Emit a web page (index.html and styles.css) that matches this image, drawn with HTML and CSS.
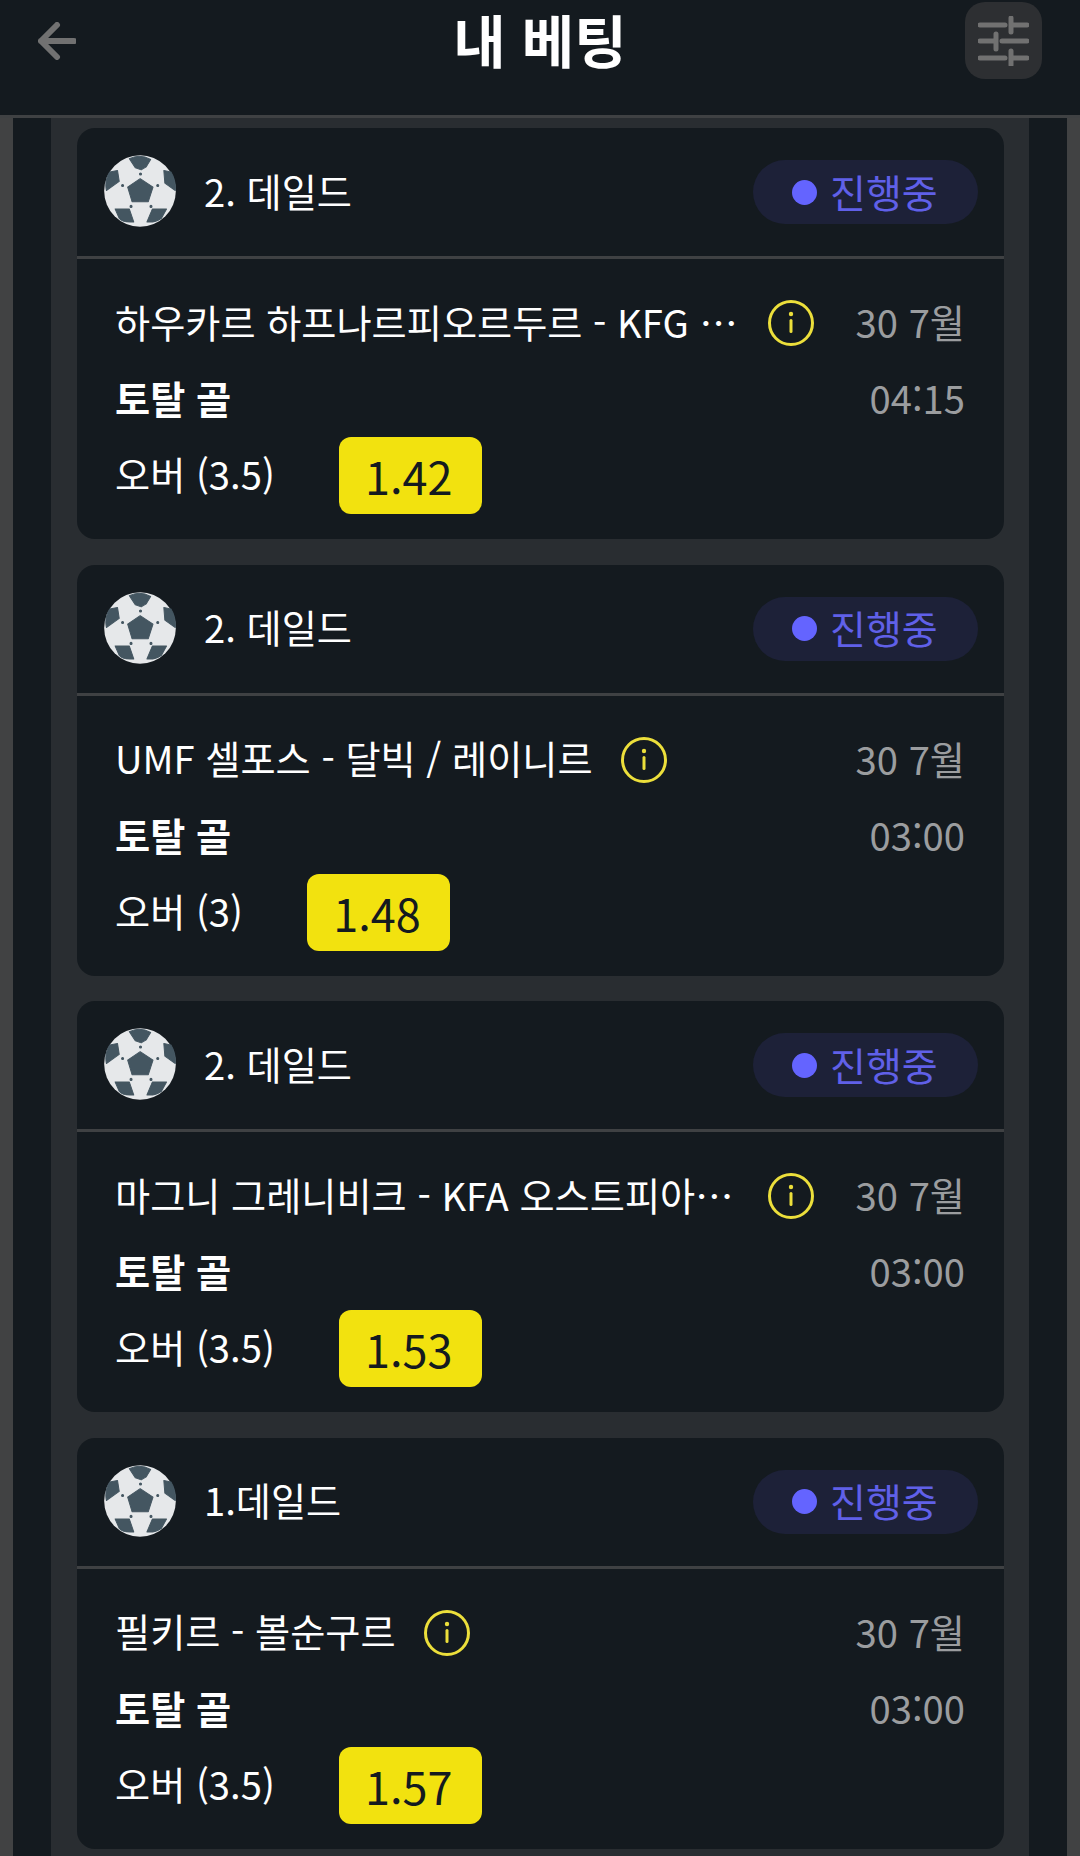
FILE: index.html
```html
<!DOCTYPE html>
<html lang="ko">
<head>
<meta charset="utf-8">
<title>내 베팅</title>
<link rel="stylesheet" href="styles.css">
</head>
<body>
<svg class="defs" width="0" height="0" aria-hidden="true">
  <symbol id="ball" viewBox="45 47 213 213">
    <circle cx="151.5" cy="153.5" r="106" fill="#e6e8ea"/>
    <g fill="#445661" stroke="#445661" stroke-width="3" stroke-linejoin="round">
      <path d="M152 117L190 142L176 185H128L115 142Z"/>
      <path d="M120 58Q150 42 183 60L170 82L155 91L138 85Z"/>
      <path d="M62 97L85 93L90 125L52 152Q46 122 62 97Z"/>
      <path d="M222 93L243 97Q258 122 256 152L225 130Z"/>
      <path d="M78 207H120L133 245Q100 248 90 234Z"/>
      <path d="M188 207H230L215 234Q195 248 172 245Z"/>
      <circle cx="153" cy="103" r="3"/>
      <circle cx="100" cy="137" r="3"/>
      <circle cx="204" cy="137" r="3"/>
      <circle cx="125" cy="199" r="3"/>
      <circle cx="184" cy="199" r="3"/>
    </g>
  </symbol>
  <symbol id="info" viewBox="0 0 46 46">
    <circle cx="23" cy="23" r="21.5" fill="none" stroke="#ecdf3b" stroke-width="3"/>
    <circle cx="23" cy="14" r="2.2" fill="#ecdf3b"/>
    <rect x="21.5" y="19" width="3" height="14" rx="1.5" fill="#ecdf3b"/>
  </symbol>
</svg>

<header class="topbar">
  <svg class="back" viewBox="0 0 38 38" aria-label="뒤로">
    <path d="M36 19H3M19 3L3 19L19 35" fill="none" stroke="#717171" stroke-width="6" stroke-linecap="round" stroke-linejoin="round"/>
  </svg>
  <h1 class="title">내 베팅</h1>
  <button class="filter" aria-label="필터">
    <svg viewBox="0 0 51 50" width="51" height="50">
      <g fill="none" stroke="#717171" stroke-width="5" stroke-linecap="round">
        <path d="M2 9H27M34 9H49M33 2V16"/>
        <path d="M2 25H15M24 25H49M18 18V33"/>
        <path d="M2 42H27M34 42H49M33 35V49"/>
      </g>
    </svg>
  </button>
</header>

<div class="frame">
  <div class="inner">
    <main class="list">

      <article class="card">
        <div class="card-head">
          <svg class="ball"><use href="#ball"/></svg>
          <span class="league">2. 데일드</span>
          <span class="status"><i class="dot"></i><span class="status-text">진행중</span></span>
        </div>
        <div class="card-body">
          <div class="row match">
            <span class="name name-clipped">하우카르 하프나르피오르두르 - KFG …</span>
            <svg class="info"><use href="#info"/></svg>
            <span class="date">30 7월</span>
          </div>
          <div class="row market-row">
            <strong class="market">토탈 골</strong>
            <span class="date">04:15</span>
          </div>
          <div class="row pick">
            <span class="selection">오버 (3.5)</span>
            <span class="odds">1.42</span>
          </div>
        </div>
      </article>

      <article class="card">
        <div class="card-head">
          <svg class="ball"><use href="#ball"/></svg>
          <span class="league">2. 데일드</span>
          <span class="status"><i class="dot"></i><span class="status-text">진행중</span></span>
        </div>
        <div class="card-body">
          <div class="row match">
            <span class="name">UMF 셀포스 - 달빅 / 레이니르</span>
            <svg class="info"><use href="#info"/></svg>
            <span class="date">30 7월</span>
          </div>
          <div class="row market-row">
            <strong class="market">토탈 골</strong>
            <span class="date">03:00</span>
          </div>
          <div class="row pick">
            <span class="selection">오버 (3)</span>
            <span class="odds">1.48</span>
          </div>
        </div>
      </article>

      <article class="card">
        <div class="card-head">
          <svg class="ball"><use href="#ball"/></svg>
          <span class="league">2. 데일드</span>
          <span class="status"><i class="dot"></i><span class="status-text">진행중</span></span>
        </div>
        <div class="card-body">
          <div class="row match">
            <span class="name name-clipped">마그니 그레니비크 - KFA 오스트피아…</span>
            <svg class="info"><use href="#info"/></svg>
            <span class="date">30 7월</span>
          </div>
          <div class="row market-row">
            <strong class="market">토탈 골</strong>
            <span class="date">03:00</span>
          </div>
          <div class="row pick">
            <span class="selection">오버 (3.5)</span>
            <span class="odds">1.53</span>
          </div>
        </div>
      </article>

      <article class="card">
        <div class="card-head">
          <svg class="ball"><use href="#ball"/></svg>
          <span class="league">1.데일드</span>
          <span class="status"><i class="dot"></i><span class="status-text">진행중</span></span>
        </div>
        <div class="card-body">
          <div class="row match">
            <span class="name">필키르 - 볼순구르</span>
            <svg class="info"><use href="#info"/></svg>
            <span class="date">30 7월</span>
          </div>
          <div class="row market-row">
            <strong class="market">토탈 골</strong>
            <span class="date">03:00</span>
          </div>
          <div class="row pick">
            <span class="selection">오버 (3.5)</span>
            <span class="odds">1.57</span>
          </div>
        </div>
      </article>

    </main>
  </div>
</div>
</body>
</html>
```
FILE: styles.css
```css
* { box-sizing: border-box; }

html, body {
  margin: 0;
  height: 1856px;
  overflow: hidden;
}

body {
  background: #141a1f;
  color: #fff;
  font-family: "Noto Sans CJK KR", "Noto Sans", sans-serif;
  font-size: 38.2px;
  display: flex;
  flex-direction: column;
}

.defs { position: absolute; }

.topbar {
  flex: none;
  height: 118px;
  padding: 2px 38px 0;
  border-bottom: 3px solid #3f4143;
  display: grid;
  grid-template-columns: 1fr auto 1fr;
  align-items: start;
  background: #141a1f;
}

.back {
  width: 38px;
  height: 38px;
  margin-top: 20px;
}

.title {
  margin: 0;
  font-size: 57px;
  font-weight: 700;
  line-height: 72px;
}

.filter {
  justify-self: end;
  width: 77px;
  height: 77px;
  padding: 0;
  border: 0;
  border-radius: 20px;
  background: #2d2f32;
  display: flex;
  align-items: center;
  justify-content: center;
}

.frame {
  flex: 1;
  min-height: 0;
  padding: 0 13px;
  background: #414243;
}

.inner {
  height: 100%;
  padding: 0 38px;
  background: #141a1f;
}

.list {
  height: 100%;
  padding: 10px 25px 0 26px;
  background: #292d31;
  display: flex;
  flex-direction: column;
  gap: 25.67px;
  overflow: hidden;
}

.card {
  flex: none;
  height: 411px;
  border-radius: 18px;
  background: #141a1f;
}

.card-head {
  height: 131px;
  padding: 0 26px 0 27px;
  border-bottom: 3px solid #3f4143;
  display: flex;
  align-items: center;
}

.ball {
  flex: none;
  width: 72px;
  height: 72px;
  margin-bottom: 2px;
}

.league {
  margin-left: 28px;
  padding-bottom: 3px;
  line-height: 50px;
}

.status {
  width: 225px;
  height: 64px;
  margin-left: auto;
  padding-left: 39px;
  border-radius: 32px;
  background: #1d2138;
  color: #6060e8;
  display: flex;
  align-items: center;
  gap: 13px;
}

.status-text {
  padding-bottom: 3px;
  font-size: 39px;
}

.dot {
  width: 25px;
  height: 25px;
  border-radius: 50%;
  background: #6464ff;
}

.card-body {
  padding: 41px 39px 25px 38px;
}

.row {
  display: flex;
  align-items: center;
}

.match { height: 46px; }

.name {
  padding-bottom: 3px;
  white-space: nowrap;
  line-height: 46px;
}

.name-clipped {
  flex: none;
  width: 625px;
}

.info {
  flex: none;
  width: 46px;
  height: 46px;
  margin-left: 28px;
}

.date {
  margin-left: auto;
  padding-bottom: 3px;
  color: #9b9d9f;
}

.market-row {
  height: 44px;
  margin-top: 32px;
}

.market-row .date {
  padding-bottom: 5px;
}

.market {
  padding-bottom: 5px;
  font-weight: 700;
}

.pick {
  height: 77px;
  margin-top: 15px;
}

.selection {
  padding-bottom: 4px;
}

.odds {
  width: 143px;
  height: 77px;
  margin-left: 64px;
  padding-right: 3px;
  border-radius: 12px;
  background: #f2e20f;
  color: #141a1f;
  font-size: 45px;
  display: flex;
  align-items: center;
  justify-content: center;
}
```
